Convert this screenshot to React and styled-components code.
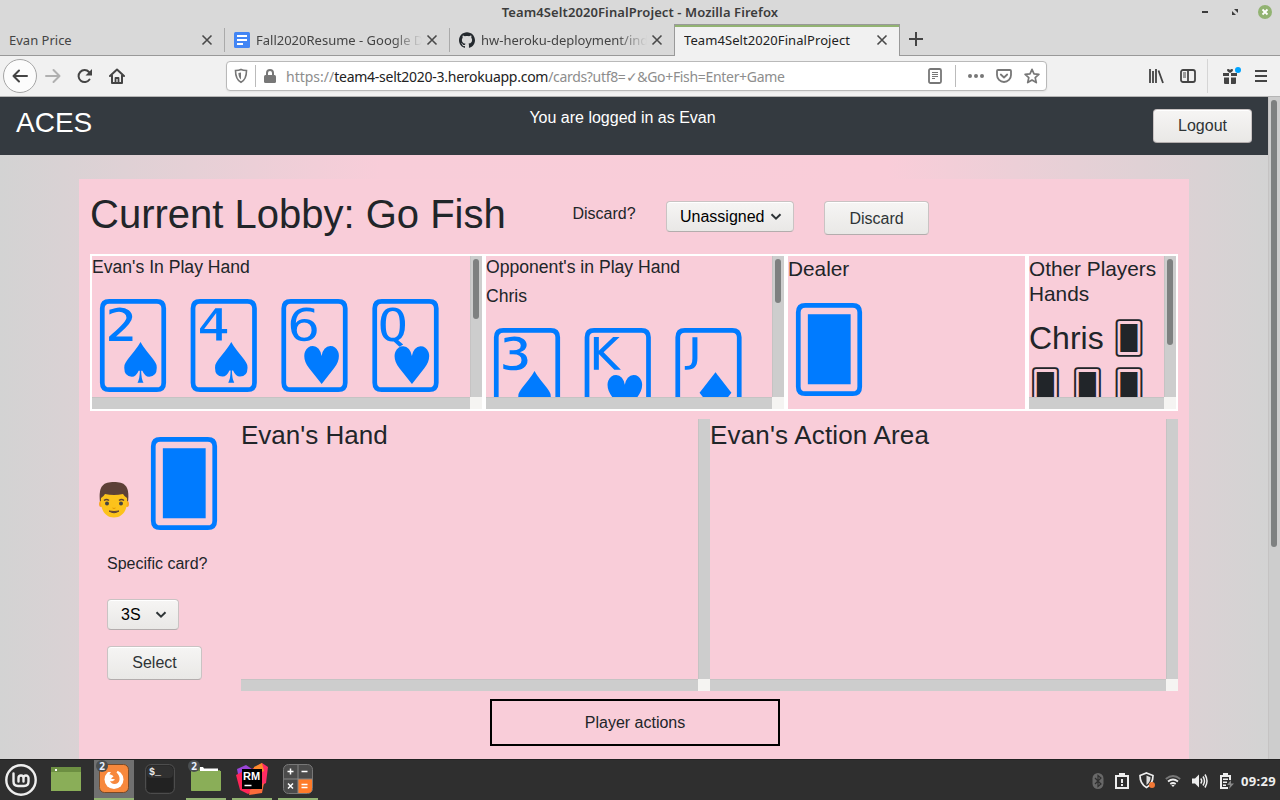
import React from 'react';
import styled, { createGlobalStyle, css } from 'styled-components';
import { SiGithub } from 'react-icons/si';

const Global = createGlobalStyle`
  *, *::before, *::after { box-sizing: border-box; }
  body { margin: 0; overflow: hidden; font-family: "Liberation Sans", Arial, sans-serif; font-size: 16px; line-height: 24px; color: #212529; }
  svg { display: block; flex: none; }
`;

const uiFont = css`font-family: "Noto Sans", "Open Sans", sans-serif;`;

const Desktop = styled.div`
  width: 1280px; height: 800px; overflow: hidden;
  display: flex; flex-direction: column;
`;

const TitleBar = styled.header`
  ${uiFont}
  height: 24px; flex: none; background: #d9d9d9; color: #3c3c3c;
  display: grid; grid-template-columns: 1fr auto 1fr; align-items: center;
`;
const WindowTitle = styled.div`
  grid-column: 2; font-weight: 600; font-size: 13px; line-height: 24px; letter-spacing: ${p => p.$track}px; white-space: nowrap;
`;
const WindowButtons = styled.div`
  display: flex; justify-content: flex-end; padding-right: 8px; height: 22px; align-items: center;
`;

const TabStrip = styled.nav`
  ${uiFont}
  height: 32px; flex: none; display: flex; background: #d9d9d9; box-shadow: inset 0 -1px #999;
`;
const Tab = styled.div`
  width: ${p => p.$w}px; height: 31px; flex: none;
  display: flex; align-items: center; gap: 6px;
  padding: 1px 11px 0 9px;
  font-size: 13px; color: #444;
  ${p => p.$active && css`
    height: 32px; color: #222;
    background: #f1f1f1; border: solid #999; border-width: 0 1px;
    box-shadow: inset 0 1px #999, inset 0 3px #92b372;
    padding-bottom: 1px;
  `}
`;
const TabLabel = styled.span`
  flex: 1; min-width: 0; overflow: hidden; white-space: nowrap; letter-spacing: ${p => p.$track || 0}px;
  ${p => p.$fade && css`margin-right: -2px; mask-image: linear-gradient(to right, #000 calc(100% - 30px), transparent);`}
`;
const TabDivider = styled.div`width: 1px; height: 24px; margin: 4px 0 0; background: #aaa; flex: none;`;
const NewTab = styled.div`padding: 7px 0 0 8px;`;

const Toolbar = styled.div`
  ${uiFont}
  height: 41px; flex: none; display: flex; align-items: center; background: #f1f1f1;
  border-bottom: 1px solid #b5b5b5; padding: 0 13px 0 3px;
`;
const BackButton = styled.div`
  width: 34px; height: 34px; border-radius: 50%; border: 1px solid #a5a5a5; background: #fcfcfc;
  display: flex; align-items: center; justify-content: center;
`;
const NavIcons = styled.div`display: flex; gap: 16px; margin-left: 8px; width: 181px;`;
const UrlBar = styled.div`
  width: 821px; height: 30px; border: 1px solid #b9b9b9; border-radius: 4px; background: #fff;
  display: flex; align-items: center; padding: 0 6px 0 7px; box-shadow: 0 1px 2px #0001;
`;
const Rule = styled.div`width: 1px; height: ${p => p.$h}px; background: ${p => p.$c || '#bbb'}; margin: 0 ${p => p.$r}px 0 ${p => p.$l}px;`;
const Url = styled.div`
  flex: 1; margin: 1px 0 0 10px; font-size: 14px; color: #8d8d8d; white-space: nowrap; letter-spacing: ${p => p.$track}px;
  b { font-weight: 400; color: #222; letter-spacing: -0.26px; }
`;
const Scheme = styled.span`letter-spacing: 0;`;
const UrlActions = styled.div`display: flex; gap: 12px; align-items: center;`;
const BrowserActions = styled.div`display: flex; align-items: center; margin-left: auto;`;
const PageTools = styled.div`display: flex; gap: 16px;`;
const MenuSlot = styled.div`margin-left: 13px;`;

const Viewport = styled.div`height: 662px; flex: none; display: flex; overflow: hidden;`;
const Page = styled.main`
  width: 1268px; height: 662px; overflow: hidden;
  background: linear-gradient(to right, #d3d3d3 0%, #f8cdd9 30%, #f9cdd9 70%, #d3d3d3 100%);
`;
const NavBar = styled.div`
  height: 58px; background: #343a40; color: #fff; display: grid; grid-template-columns: 1fr auto 1fr; padding: 0 16px;
`;
const Brand = styled.div`font-size: 28px; line-height: 52px;`;
const LoginNote = styled.div`line-height: 24px; padding-top: 9px; margin-left: -23px;`;
const NavEnd = styled.div`display: flex; justify-content: flex-end; padding-top: 12px;`;

const Button = styled.button`
  width: ${p => p.$w}px; height: 34px; padding: ${p => p.$drop || 0}px 0 0; font: 16px/24px "Liberation Sans", sans-serif; color: #2e3436;
  border: 1px solid #c9c3c3; border-bottom-color: #b3adad; border-radius: 4px;
  background: linear-gradient(#f6f5f4, #e9e8e6); box-shadow: inset 0 1px #fff;
`;
const Picker = styled.div`
  width: ${p => p.$w}px; height: 31px; padding: 0 11px 0 13px; color: #000; font-size: 16px;
  display: flex; align-items: center; justify-content: space-between;
  border: 1px solid #c9c3c3; border-bottom-color: #b3adad; border-radius: 4px;
  background: linear-gradient(#f6f5f4, #e9e8e6); box-shadow: inset 0 1px #fff;
`;

const Lobby = styled.section`
  width: 1110px; height: 620px; margin: 24px 0 0 79px; padding: 0 11px; background: #f9cdd9;
`;
const LobbyHeader = styled.div`display: flex; height: 75px; align-items: flex-start; padding-top: 22px;`;
const LobbyTitle = styled.h1`margin: -11px 0 0; width: 482.5px; font-size: 40px; line-height: 48px; font-weight: 400; white-space: nowrap;`;
const FieldLabel = styled.div`width: ${p => p.$w}px; line-height: 24px; padding-top: 1px;`;
const Spacer = styled.div`width: 30px;`;

const Board = styled.div`display: flex; width: 1088px; height: 157px;`;
const Cell = styled.div`width: ${p => p.$w}px; height: 157px; border: 2px solid #fff;`;
const ScrollFrame = styled.div`
  width: 100%; height: ${p => p.$h}px; display: grid;
  grid-template: minmax(0, 1fr) 12px / minmax(0, 1fr) 12px;
`;
const ScrollBody = styled.div`overflow: hidden;`;
const TrackV = styled.div`background: #cdcdcd; padding: 3px 3px; box-shadow: inset 1px 0 #c5c3c3;`;
const TrackH = styled.div`background: #cdcdcd; box-shadow: inset 0 1px #c5c3c3;`;
const Corner = styled.div`background: #f5f4f2;`;
const Thumb = styled.div`width: 6px; height: ${p => p.$h}px; border-radius: 3px; background: #7e8080;`;

const HandTitle = styled.div`font-size: 17.6px; line-height: 23px; height: 29px; white-space: nowrap;`;
const AreaTitle = styled.div`
  font-size: ${p => p.$size}px; line-height: ${p => p.$lh}px; letter-spacing: ${p => p.$track || 0}px;
  white-space: ${p => p.$wrap ? 'normal' : 'nowrap'};
`;
const Cards = styled.div`
  display: flex; color: #007bff; font: 80px/100px "DejaVu Sans", sans-serif; margin-top: ${p => p.$top}px;
`;
const Card = styled.span`width: 90.7px; flex: none; white-space: nowrap;`;
const OtherHands = styled.div`
  display: grid; grid-template-columns: 42px 41.5px 41.5px; font-size: 32px; line-height: 48px; padding-top: 8px;
`;
const PlayerName = styled.span`grid-column: span 2;`;
const SmallCard = styled.span`font: 32px/48px "DejaVu Sans", sans-serif; white-space: nowrap;`;

const PlayRow = styled.div`display: flex; margin-top: 8px; height: 272px;`;
const Side = styled.div`width: 151px; display: flex; flex-direction: column; align-items: flex-start;`;
const SeatRow = styled.div`display: flex; height: 132px; padding: 2px 0 0 8px;`;
const Avatar = styled.svg`margin: 60px 13px 0 0;`;
const SideControls = styled.div`display: flex; flex-direction: column; padding-left: 17px;`;
const Gap = styled.div`height: ${p => p.$h}px;`;
const Area = styled.div`width: ${p => p.$w}px;`;
const ActionsBox = styled.div`
  width: 290px; height: 47px; margin: 8px 0 0 400px; border: 2px solid #000; text-align: center; line-height: 43px;
`;

const Taskbar = styled.footer`
  ${uiFont}
  height: 41px; flex: none; background: #2f2f2f; border-top: 1px solid #222; display: flex; color: #fff;
`;
const Launcher = styled.div`
  position: relative; width: 40px; height: 40px; margin-right: ${p => p.$after || 6}px; display: flex; justify-content: center; align-items: center;
  background: ${p => (p.$focus ? '#707070' : 'transparent')};
  border-bottom: 2px solid ${p => (p.$open ? '#92b372' : 'transparent')};
  background-clip: padding-box;
`;
const Badge = styled.span`
  position: absolute; left: 2px; top: 0; width: 12px; height: 12px; border-radius: 50%; background: #4a4e50; color: #e8f0ff;
  font: 700 10px/12px "Noto Sans", sans-serif; text-align: center;
`;
const Launchers = styled.div`display: flex; padding-left: 1px;`;
const Tray = styled.div`display: flex; align-items: center; margin-left: auto; padding-right: 2px; height: 41px;`;
const TrayItem = styled.div`width: ${p => p.$w}px; display: flex; justify-content: center;`;
const Clock = styled.div`width: 37px; font-weight: 700; font-size: 13px; white-space: nowrap; color: #eee; letter-spacing: 0.3px;`;
const IconText = styled.text`font: ${p => p.$font};`;

const CloseX = () => (
  <svg width="12" height="12" viewBox="0 0 12 12" stroke="#4a4a4a" strokeWidth="1.6"><path d="M1.5 1.5l9 9M10.5 1.5l-9 9" /></svg>
);
const Chevron = () => (
  <svg width="12" height="8" viewBox="0 0 12 8" fill="none" stroke="#2e3436" strokeWidth="2"><path d="M1.5 1.2L6 5.700l4.500-4.500" /></svg>
);
const Docs = () => (
  <svg width="16" height="16" viewBox="0 0 16 16"><rect width="16" height="16" rx="1.500" fill="#4285f4" /><path d="M3 4h10M3 8h10M3 12h6" stroke="#fff" strokeWidth="2" /></svg>
);

function Scrolling({ h, thumb, children }) {
  return (
    <ScrollFrame $h={h}>
      <ScrollBody>{children}</ScrollBody>
      <TrackV>{thumb && <Thumb $h={thumb} />}</TrackV>
      <TrackH />
      <Corner />
    </ScrollFrame>
  );
}

function Browser() {
  return (
    <>
      <TitleBar>
        <WindowTitle $track={0.09}>Team4Selt2020FinalProject - Mozilla Firefox</WindowTitle>
        <WindowButtons>
          <svg width="72" height="16" viewBox="0 0 72 16">
            <path d="M2 8h6" stroke="#3c3c3c" strokeWidth="2" />
            <path d="M34 5h4v4zM32 7v4h4z" fill="#3c3c3c" />
            <circle cx="65" cy="8" r="7" fill="#92b372" />
            <path d="M62.500 5.500l5 5M67.500 5.500l-5 5" stroke="#fff" strokeWidth="1.800" />
          </svg>
        </WindowButtons>
      </TitleBar>
      <TabStrip>
        <Tab $w={224}><TabLabel>Evan Price</TabLabel><CloseX /></Tab>
        <TabDivider />
        <Tab $w={224}><Docs /><TabLabel $fade>Fall2020Resume - Google Docs</TabLabel><CloseX /></Tab>
        <TabDivider />
        <Tab $w={224}><SiGithub size={16} color="#24292e" /><TabLabel $fade>hw-heroku-deployment/index.html</TabLabel><CloseX /></Tab>
        <Tab $w={226} $active><TabLabel $track={0.08}>Team4Selt2020FinalProject</TabLabel><CloseX /></Tab>
        <NewTab><svg width="16" height="16" viewBox="0 0 16 16" stroke="#444" strokeWidth="2"><path d="M8 1v14M1 8h14" /></svg></NewTab>
      </TabStrip>
      <Toolbar>
        <BackButton>
          <svg width="16" height="14" viewBox="0 0 16 14" fill="none" stroke="#444" strokeWidth="2" strokeLinecap="round" strokeLinejoin="round"><path d="M15 7H1.500M7 1.500L1.500 7 7 12.500" /></svg>
        </BackButton>
        <NavIcons>
          <svg width="16" height="16" viewBox="0 0 16 16" fill="none" stroke="#b0b0b0" strokeWidth="2" strokeLinecap="round" strokeLinejoin="round"><path d="M1 8h13M8.500 2l6 6-6 6" /></svg>
          <svg width="16" height="16" viewBox="0 0 16 16" fill="none" stroke="#444" strokeWidth="2"><path d="M12.500 11.500A6 6 0 1 1 12 4" strokeLinecap="round" /><path d="M15 1v6.500H8.500z" fill="#444" stroke="none" /></svg>
          <svg width="16" height="16" viewBox="0 0 16 16" fill="none" stroke="#444" strokeWidth="2" strokeLinejoin="round" strokeLinecap="round"><path d="M1 8l7-6.500L15 8M3 7.500V15h10V7.500" /><path d="M6.500 15v-5h3v5" strokeWidth="1.800" /></svg>
        </NavIcons>
        <UrlBar>
          <svg width="14" height="16" viewBox="0 0 14 16" fill="none" stroke="#777" strokeWidth="1.600"><path d="M7 1.500c2 1 4 1 5.500 1 0 6-1 9.500-5.500 11.800C2.500 12 1.500 8.500 1.500 2.500c1.500 0 3.500 0 5.500-1z" /><path d="M7 4.500v7C5 10 4.500 8 4.400 5z" fill="#777" stroke="none" /></svg>
          <Rule $h={22} $l={7} $r={8} />
          <svg width="12" height="14" viewBox="0 0 12 14"><rect y="6" width="12" height="8" rx="1.500" fill="#777" /><path d="M3 7V4a3 3 0 0 1 6 0v3" fill="none" stroke="#777" strokeWidth="2" /></svg>
          <Url $track={-0.32}><Scheme>https://</Scheme><b>team4-selt2020-3.herokuapp.com</b>/cards?utf8=✓&amp;Go+Fish=Enter+Game</Url>
          <svg width="14" height="16" viewBox="0 0 14 16" fill="none" stroke="#777"><rect x="1" y="1" width="12" height="14" rx="1.500" strokeWidth="1.800" /><path d="M4 4.500h6M4 6.500h6M4 8.500h6M4 10.500h3" /></svg>
          <Rule $h={22} $l={13} $r={12} />
          <UrlActions>
            <svg width="16" height="16" viewBox="0 0 16 16" fill="#777"><circle cx="2" cy="8" r="2" /><circle cx="8" cy="8" r="2" /><circle cx="14" cy="8" r="2" /></svg>
            <svg width="16" height="16" viewBox="0 0 16 16" fill="none" stroke="#777" strokeWidth="1.800" strokeLinecap="round" strokeLinejoin="round"><path d="M2 2h12q1 0 1 1v4a7 7 0 0 1-14 0V3q0-1 1-1z" /><path d="M4.800 6.500L8 9.500l3.200-3" /></svg>
            <svg width="16" height="16" viewBox="0 0 16 16" fill="none" stroke="#777" strokeWidth="1.700" strokeLinejoin="round"><path d="M8 1.300l2 4.500 4.900.5-3.700 3.300 1.100 5L8 12l-4.300 2.600 1.100-5L1.100 6.300 6 5.800z" /></svg>
          </UrlActions>
        </UrlBar>
        <BrowserActions>
          <PageTools>
            <svg width="16" height="16" viewBox="0 0 16 16" stroke="#444" strokeWidth="1.800"><path d="M2 1v14M5 3v12M8 1v14M10.500 2.500L15 15" /></svg>
            <svg width="16" height="16" viewBox="0 0 16 16" fill="none" stroke="#444" strokeWidth="1.800"><rect x="1" y="2" width="14" height="12" rx="2" /><path d="M8 2v12" /><path d="M3 5h3M3 7h3M3 9h3" strokeWidth="1" /></svg>
          </PageTools>
          <Rule $h={34} $l={11} $r={14} $c="#d5d5d5" />
          <svg width="20" height="18" viewBox="0 0 20 18"><path d="M1 6h6v3H1zM9 6h6v3H9zM2 10.500h5V17H3q-1 0-1-1zM9 10.500h5V16q0 1-1 1H9z" fill="#444" /><path d="M8 6C6 5 5 4 5 3s2-1.500 3 0c1-1.500 3-1 3 0S10 5 8 6z" fill="#444" /><circle cx="16" cy="3" r="3" fill="#00a4ff" /></svg>
          <MenuSlot><svg width="12" height="14" viewBox="0 0 12 14" stroke="#444" strokeWidth="2"><path d="M0 2h12M0 7h12M0 12h12" /></svg></MenuSlot>
        </BrowserActions>
      </Toolbar>
    </>
  );
}

function Panel() {
  return (
    <Taskbar>
      <Launchers>
        <Launcher $after={5}>
          <svg width="32" height="34" viewBox="0 -2 32 34" fill="none" stroke="#eee" strokeLinecap="round"><circle cx="16" cy="16" r="14.700" strokeWidth="2.400" /><path d="M8.500 9.500v8q0 4.500 4.500 4.500h6q4.500 0 4.500-4.500v-3.500a2.500 2.500 0 0 0-5 0V17.500M18.500 14a2.500 2.500 0 0 0-5 0v3.500" strokeWidth="2.400" /></svg>
        </Launcher>
        <Launcher $after={8}>
          <svg width="30" height="24" viewBox="0 0 30 24"><rect width="30" height="24" fill="#8aae58" /><rect width="30" height="5" fill="#6d8f42" /><path d="M4 2h2v2H4z" fill="#fff" /></svg>
        </Launcher>
        <Launcher $focus $open>
          <svg width="30" height="30" viewBox="0 0 30 30"><rect x=".5" y=".5" width="29" height="28" rx="5" fill="#f7883c" stroke="#7a4a26" /><circle cx="15" cy="15.500" r="9.500" fill="#fff" /><path d="M8.500 4.500L20 5l-2.500 3.500c2 2 3.500 4 3 7.500-.5 2.500-2.500 4-5 4-2.500 0-4-1.500-4.500-3 2 1 3.500-.5 5-1.300-.5-.9-2.500-.8-3.700-.7.200-1.500 1.400-2 2.200-2.500-1-1.500-2.500-2-4-2 .2-1 .8-1.700 1.500-2.500L8.500 8 6 8z" fill="#f7883c" /></svg>
          <Badge>2</Badge>
        </Launcher>
        <Launcher>
          <svg width="30" height="30" viewBox="0 0 30 30"><rect x=".7" y=".7" width="28.600" height="28.600" rx="5" fill="#222" stroke="#555" /><rect x="2" y="2" width="26" height="12" rx="4" fill="#303030" /><IconText x="4" y="11" fill="#eee" $font='700 10px "Liberation Mono", monospace'>$_</IconText></svg>
        </Launcher>
        <Launcher $open>
          <svg width="30" height="28" viewBox="0 0 30 28"><path d="M0 5q0-3 3-3h7l2 3h17v20q0 1-1 1H1q-1 0-1-1z" fill="#6d8f42" /><path d="M9 2h3l1 1.500h14V6H9z" fill="#fff" /><path d="M0 6h30v19q0 1-1 1H1q-1 0-1-1z" fill="#8aae58" /></svg>
          <Badge>2</Badge>
        </Launcher>
        <Launcher $open>
          <svg width="32" height="32" viewBox="0 0 32 32"><path d="M1 6l9-4 6 4-2 12-9 9z" fill="#9b45d8" /><path d="M16 6l10-6 6 4-2 16-8 4z" fill="#ff2c63" /><path d="M18 4l8-4 2 8-12 6z" fill="#fc8a2c" /><path d="M0 12l8-4v18l18-4-14 9-8-4z" fill="#ff2557" /><path d="M14 27l14-7-2 10-13 2z" fill="#fb6c3a" /><rect x="6" y="6" width="20" height="20" fill="#000" /><IconText x="7" y="17" fill="#fff" $font='700 11px "Liberation Sans", sans-serif'>RM</IconText><path d="M8.500 22.500h7" stroke="#fff" strokeWidth="1.500" /></svg>
        </Launcher>
        <Launcher $open>
          <svg width="30" height="30" viewBox="0 0 30 30"><rect x=".5" y=".5" width="29" height="29" rx="5" fill="#4b4b4b" stroke="#777" /><path d="M15 15h14v10q0 4-4 4H15z" fill="#ff7b29" /><path d="M15 1v28M1 15h28" stroke="#888" /><path d="M4.500 7.500h6M7.500 4.500v6M18.500 7.500h6M5 19.500l5 5M10 19.500l-5 5M18.500 20.500h6M18.500 23.500h6" stroke="#fff" strokeWidth="1.500" /></svg>
        </Launcher>
      </Launchers>
      <Tray>
        <TrayItem $w={24}><svg width="12" height="16" viewBox="0 0 12 16"><rect x=".5" width="11" height="16" rx="5.500" fill="#686868" /><path d="M3 5l6 6-3 2.500v-11L9 5l-6 6" fill="none" stroke="#2f2f2f" strokeWidth="1.200" /></svg></TrayItem>
        <TrayItem $w={24}><svg width="14" height="16" viewBox="0 0 14 16"><rect x="1" y="3" width="12" height="12" fill="none" stroke="#eee" strokeWidth="2" /><path d="M4 0h6v4H4z" fill="#eee" /><path d="M7 6v4M7 11v2" stroke="#eee" strokeWidth="2" /></svg></TrayItem>
        <TrayItem $w={25}><svg width="16" height="17" viewBox="0 0 16 17"><path d="M7.500 1l6.500 2.500C14 9 12 13 7.500 15.500 3 13 1 9 1 3.500z" fill="none" stroke="#eee" strokeWidth="1.700" /><path d="M7.500 3.500l4 1.700C11.500 9 10 11 7.500 13z" fill="#ddd" /><circle cx="13" cy="13" r="3" fill="#f27835" /></svg></TrayItem>
        <TrayItem $w={28}><svg width="16" height="16" viewBox="0 0 16 16" fill="none" stroke="#eee" strokeWidth="1.800"><path d="M.8 6q7.200-6 14.400 0" stroke="#777" /><path d="M3 8.500q5-4 10 0M5.300 11q2.700-2 5.400 0" /><path d="M6.300 12.200L8 14l1.700-1.800q-1.700-1-3.400 0z" fill="#eee" stroke="none" /></svg></TrayItem>
        <TrayItem $w={25}><svg width="16" height="16" viewBox="0 0 16 16" fill="none" stroke="#eee" strokeWidth="1.500"><path d="M0 5.500h3L7 1.500v13l-4-4H0z" fill="#eee" stroke="none" /><path d="M8.700 5.500q2 2.500 0 5M11 3.500q3 4.500 0 9M13 1.500q4 6.500 0 13" /></svg></TrayItem>
        <TrayItem $w={29}><svg width="15" height="16" viewBox="0 0 15 16"><path d="M11 7V3H2v12h7" fill="none" stroke="#eee" strokeWidth="2" /><path d="M4 0h5v3H4zM4 5.500h5V7H4zM4 8.500h4V10H4zM4 11.500h3V13H4z" fill="#eee" /><path d="M12 7l-4 5h3l-1 4 5-5.500h-3z" fill="#888" /></svg></TrayItem>
        <Clock>09:29</Clock>
      </Tray>
    </Taskbar>
  );
}

export default function App() {
  return (
    <Desktop>
      <Global />
      <Browser />
      <Viewport>
        <Page>
          <NavBar>
            <Brand>ACES</Brand>
            <LoginNote>You are logged in as Evan</LoginNote>
            <NavEnd><Button $w={99}>Logout</Button></NavEnd>
          </NavBar>
          <Lobby>
            <LobbyHeader>
              <LobbyTitle>Current Lobby: Go Fish</LobbyTitle>
              <FieldLabel $w={93.5}>Discard?</FieldLabel>
              <Picker $w={128}>Unassigned<Chevron /></Picker>
              <Spacer />
              <Button $w={105} $drop={1.5}>Discard</Button>
            </LobbyHeader>
            <Board>
              <Cell $w={394}>
                <Scrolling h={153} thumb={60}>
                  <HandTitle>Evan's In Play Hand</HandTitle>
                  <Cards $top={11}><Card>🂢</Card><Card>🂤</Card><Card>🂶</Card><Card>🂽</Card></Cards>
                </Scrolling>
              </Cell>
              <Cell $w={302}>
                <Scrolling h={153} thumb={44}>
                  <HandTitle>Opponent's in Play Hand</HandTitle>
                  <HandTitle>Chris</HandTitle>
                  <Cards $top={11}><Card>🂣</Card><Card>🂾</Card><Card>🃋</Card></Cards>
                </Scrolling>
              </Cell>
              <Cell $w={241}>
                <AreaTitle $size={20.8} $lh={25}>Dealer</AreaTitle>
                <Cards $top={19}><Card>🂠</Card></Cards>
              </Cell>
              <Cell $w={151}>
                <Scrolling h={153} thumb={86}>
                  <AreaTitle $size={20.8} $lh={25} $wrap>Other Players Hands</AreaTitle>
                  <OtherHands>
                    <PlayerName>Chris</PlayerName><SmallCard>🂠</SmallCard>
                    <SmallCard>🂠</SmallCard><SmallCard>🂠</SmallCard><SmallCard>🂠</SmallCard>
                  </OtherHands>
                </Scrolling>
              </Cell>
            </Board>
            <PlayRow>
              <Side>
                <SeatRow>
                  <Avatar width="32" height="38" viewBox="0 0 32 38">
                    <path d="M2 21C0 4 6 1 16 1s16 3 14 20z" fill="#5d4037" />
                    <ellipse cx="3" cy="23" rx="2" ry="3" fill="#f9a825" /><ellipse cx="29" cy="23" rx="2" ry="3" fill="#f9a825" />
                    <path d="M3 17q3-2 4-4 9 2 18 0 1 2 4 4c1 13-5 19.500-13 19.500S2 30 3 17z" fill="#fcc21b" />
                    <path d="M6 19.500q2.500-2 5 0M21 19.500q2.500-2 5 0" stroke="#5d4037" strokeWidth="1.500" fill="none" />
                    <circle cx="9" cy="22.500" r="2" fill="#444" /><circle cx="23" cy="22.500" r="2" fill="#444" />
                    <path d="M11 30q5 3.500 10 0-5 1-10 0z" fill="#5d4037" stroke="#5d4037" /><path d="M14.500 27q1.500 1 3 0" stroke="#e59600" fill="none" />
                  </Avatar>
                  <Cards $top={13}><Card>🂠</Card></Cards>
                </SeatRow>
                <SideControls>
                  <FieldLabel $w={110}>Specific card?</FieldLabel>
                  <Gap $h={23} />
                  <Picker $w={72}>3S<Chevron /></Picker>
                  <Gap $h={16} />
                  <Button $w={95}>Select</Button>
                </SideControls>
              </Side>
              <Area $w={469}><Scrolling h={272}><AreaTitle $size={26} $lh={32}>Evan's Hand</AreaTitle></Scrolling></Area>
              <Area $w={468}><Scrolling h={272}><AreaTitle $size={26} $lh={32} $track={0.17}>Evan's Action Area</AreaTitle></Scrolling></Area>
            </PlayRow>
            <ActionsBox>Player actions</ActionsBox>
          </Lobby>
        </Page>
        <TrackV><Thumb $h={447} /></TrackV>
      </Viewport>
      <Panel />
    </Desktop>
  );
}
